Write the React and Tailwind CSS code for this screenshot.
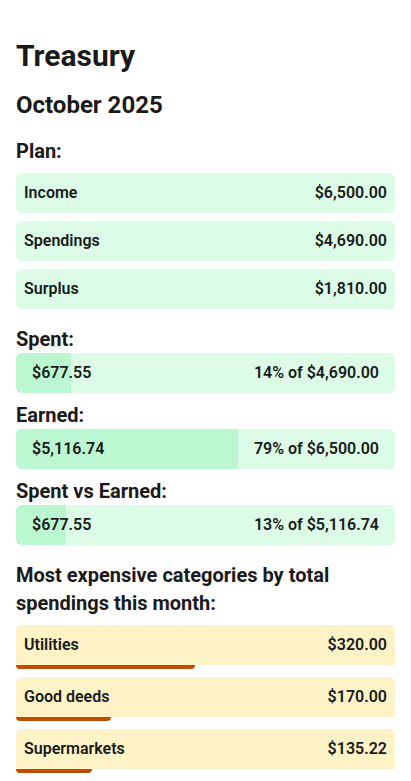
import React from 'react';

const plan = [
  { label: 'Income', value: '$6,500.00' },
  { label: 'Spendings', value: '$4,690.00' },
  { label: 'Surplus', value: '$1,810.00' },
];

const progress = [
  { title: 'Spent:', amount: '$677.55', note: '14% of $4,690.00', fill: 55 },
  { title: 'Earned:', amount: '$5,116.74', note: '79% of $6,500.00', fill: 222 },
  { title: 'Spent vs Earned:', amount: '$677.55', note: '13% of $5,116.74', fill: 50 },
];

const categories = [
  { name: 'Utilities', total: '$320.00', bar: 179 },
  { name: 'Good deeds', total: '$170.00', bar: 95 },
  { name: 'Supermarkets', total: '$135.22', bar: 76 },
];

function ProgressBar({ amount, note, fill }) {
  return (
    <div className="relative h-10 overflow-hidden rounded-md bg-[#dcfce7]">
      <div className="absolute inset-y-0 left-0 bg-[#bbf7d0]" style={{ width: fill }} />
      <div className="relative flex h-full items-center justify-between px-4 text-base font-semibold">
        <span>{amount}</span>
        <span>{note}</span>
      </div>
    </div>
  );
}

export default function App() {
  return (
    <div className="min-h-screen bg-white px-4 pt-[38px] pb-2 font-['Roboto',sans-serif] text-[#1a1a1a]">
      <h1 className="text-3xl font-bold">Treasury</h1>
      <h2 className="mt-[15px] text-2xl font-bold">October 2025</h2>

      <h3 className="mt-4 text-xl font-bold">Plan:</h3>
      <div className="mt-2 flex flex-col gap-2">
        {plan.map((row) => (
          <div
            key={row.label}
            className="flex h-10 items-center justify-between rounded-md bg-[#dcfce7] px-2 text-base font-semibold"
          >
            <span>{row.label}</span>
            <span>{row.value}</span>
          </div>
        ))}
      </div>

      <div className="mt-4 flex flex-col gap-2">
        {progress.map((p) => (
          <div key={p.title}>
            <h3 className="text-xl font-bold">{p.title}</h3>
            <ProgressBar amount={p.amount} note={p.note} fill={p.fill} />
          </div>
        ))}
      </div>

      <h3 className="mt-4 text-xl font-bold">
        Most expensive categories by total spendings this month:
      </h3>
      <div className="mt-2 flex flex-col gap-2">
        {categories.map((c) => (
          <div key={c.name}>
            <div className="flex h-10 items-center justify-between rounded-t-md bg-[#fef3c7] px-2 text-base font-semibold">
              <span>{c.name}</span>
              <span>{c.total}</span>
            </div>
            <div className="h-1 rounded-b-md bg-[#bf4d00]" style={{ width: c.bar }} />
          </div>
        ))}
      </div>
    </div>
  );
}
